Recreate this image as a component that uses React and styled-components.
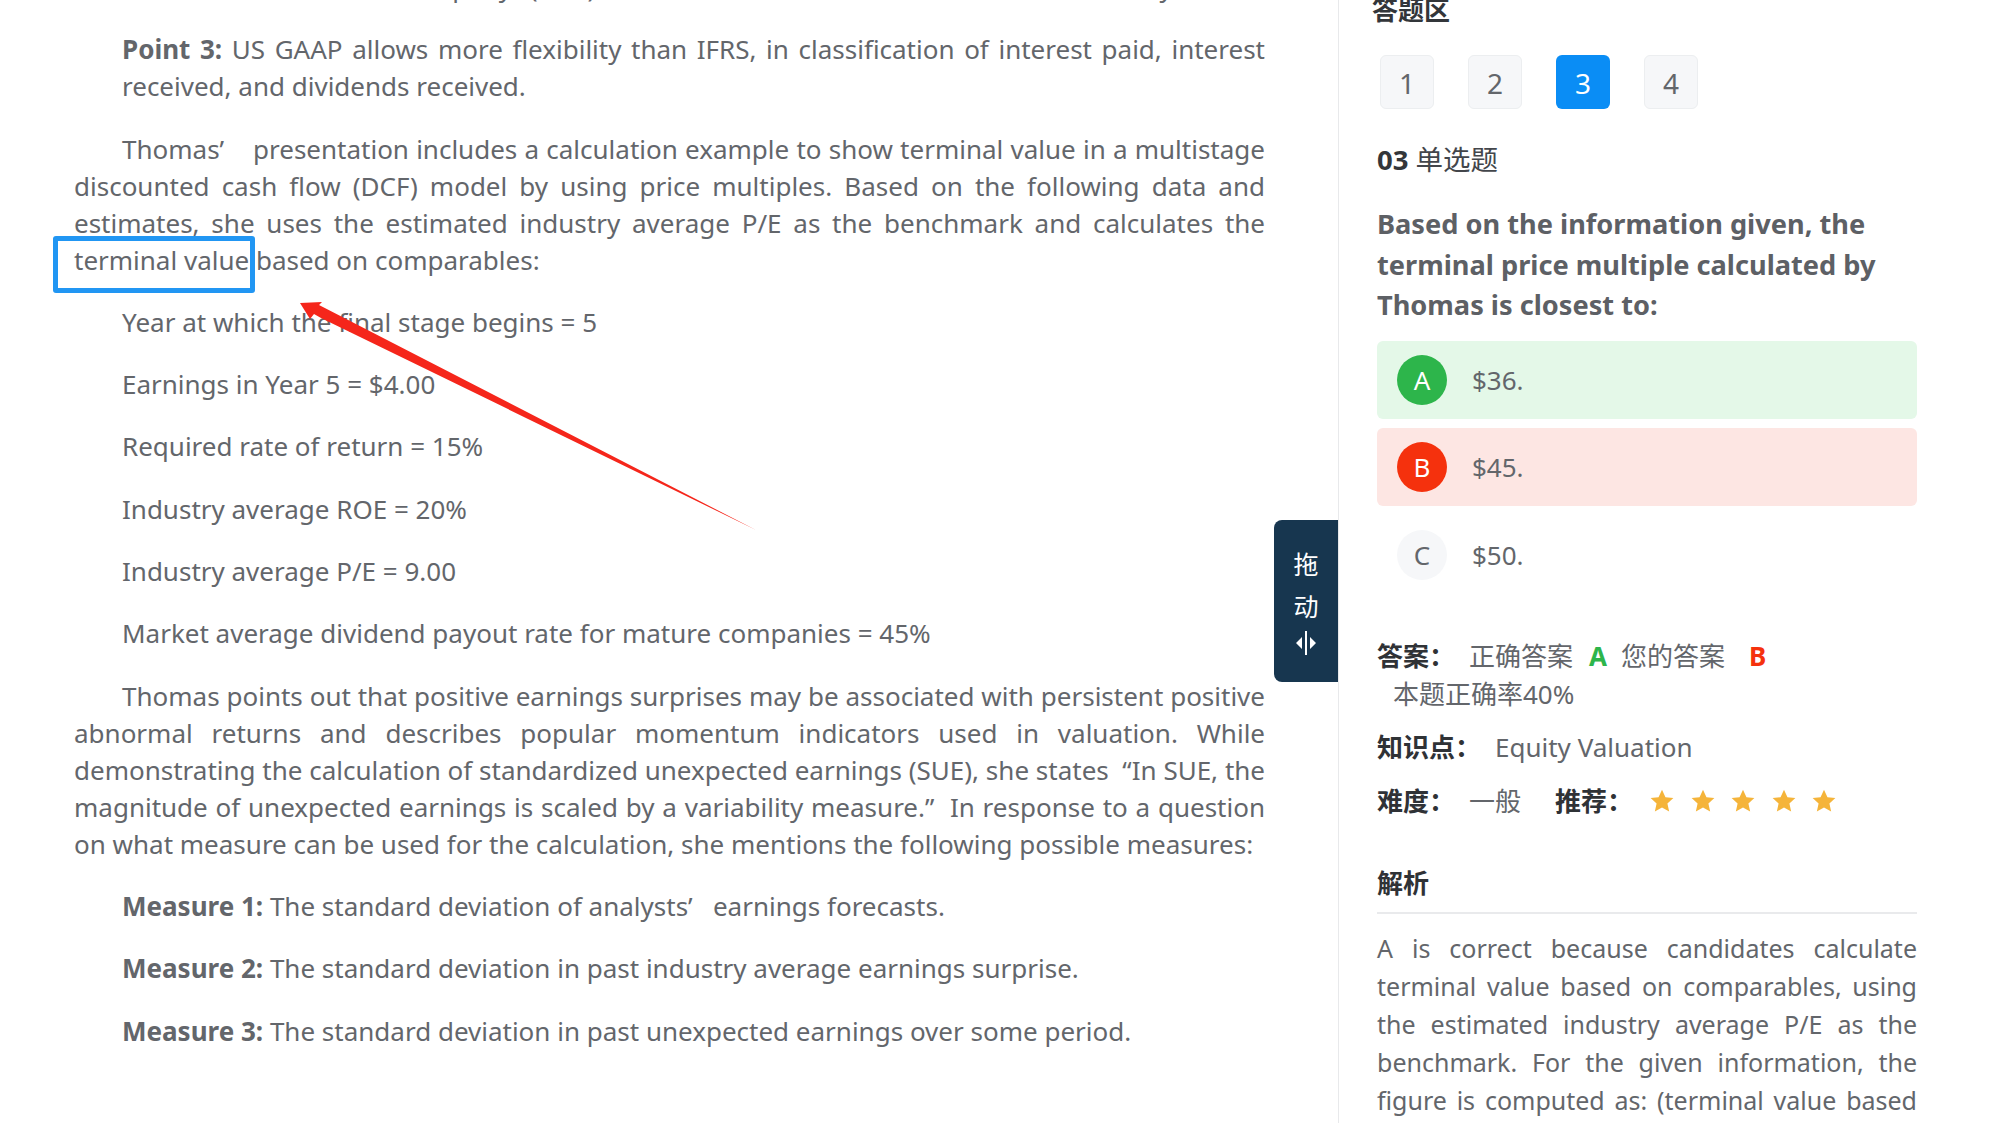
import React from "react";
import styled, { createGlobalStyle } from "styled-components";

const Global = createGlobalStyle`
  html, body { margin: 0; padding: 0; background: #fff; }
  body { font-family: "Noto Sans", "Noto Sans CJK SC", sans-serif; color: #63666b; }
`;
const Page = styled.div`
  display: flex; width: 2000px; height: 1123px; overflow: hidden; position: relative;
`;
const Left = styled.div`
  width: 1339px; flex: none; box-sizing: border-box; padding: 0 73px 0 74px; position: relative;
  border-right: 1px solid #e8e9eb;
`;
const Scroll = styled.div`margin-top: -31px;`;
const P = styled.p`
  margin: 0 0 25.3px; font-size: 26px; line-height: 37px; text-align: justify;
  ${p => p.$pad ? "padding-left: 48px;" : "text-indent: 48px;"}
  b { font-weight: 700; }
  ${p => p.$fill ? "text-align-last: justify;" : ""}
`;
const Handle = styled.div`
  position: absolute; right: 0; top: 520px; width: 64px; height: 162px; background: #17364f;
  border-radius: 8px 0 0 8px; color: #fff; display: flex; flex-direction: column; align-items: center;
  padding-top: 23px; box-sizing: border-box; font-size: 25px; line-height: 42px;
`;
const HandleIcon = styled.svg`margin-top: 4px;`;
const Highlight = styled.div`
  position: absolute; left: 53px; top: 236px; width: 202px; height: 57px; box-sizing: border-box;
  border: 5px solid #2196f3; border-radius: 3px;
`;
const Arrow = styled.svg`position: absolute; left: 290px; top: 290px; pointer-events: none;`;
const Right = styled.div`flex: 1; box-sizing: border-box; padding: 0 83px 0 38px; margin-top: -8px;`;
const Title = styled.div`font-size: 26px; font-weight: 700; color: #33363a; line-height: 36px; margin-left: -5px;`;
const Nums = styled.div`display: flex; gap: 34px; margin: 27px 0 0 3px;`;
const Num = styled.div`
  width: 54px; height: 54px; box-sizing: border-box; border-radius: 6px; display: flex; align-items: center; justify-content: center;
  font-size: 28px; padding-top: 2px; background: ${p => p.$on ? "#0a8df5" : "#f6f7f9"}; color: ${p => p.$on ? "#fff" : "#63666b"};
  border: ${p => p.$on ? "none" : "1px solid #eceef0"};
`;
const QType = styled.div`font-size: 27.5px; line-height: 36px; margin-top: 33px; color: #43464b; b { color: #33363a; font-weight: 700; }`;
const Question = styled.div`font-size: 27.2px; font-weight: 700; line-height: 40.5px; margin-top: 26px; color: #5d6065;`;
const Option = styled.div`
  display: flex; align-items: center; gap: 25px; height: 78px; padding-left: 20px; margin-top: ${p => p.$first ? "15px" : "9.5px"};
  background: ${p => p.$bg || "transparent"}; border-radius: 6px; font-size: 26px;
`;
const Badge = styled.div`
  width: 50px; height: 50px; border-radius: 50%; display: flex; align-items: center; justify-content: center; font-size: 26px;
  background: ${p => p.$bg}; color: ${p => p.$c};
`;
const Row = styled.div`font-size: 26px; line-height: 38px; display: flex; align-items: center; margin-top: ${p => p.$mt || 0}px;`;
const Label = styled.span`font-weight: 700; color: #2f3236; margin-left: ${p => p.$ml || 0}px;`;
const Val = styled.span`margin-left: ${p => p.$ml || 0}px; color: ${p => p.$c || "#63666b"}; font-weight: ${p => p.$b ? 700 : 400};`;
const Stars = styled.span`display: inline-flex; gap: 14.5px; margin-left: 16px;`;
const SubTitle = styled.div`
  font-size: 26px; font-weight: 700; color: #2f3236; line-height: 36px; margin-top: 45px; padding-bottom: 11px; border-bottom: 2px solid #e9eaec;
`;
const Analysis = styled.div`font-size: 25px; line-height: 38px; text-align: justify; margin-top: 15px;`;

const Star = () => (
  <svg width="26" height="26" viewBox="0 0 24 24"><path fill="#f5b43a" d="M12 1.5l3.2 7 7.3.8-5.5 5 1.6 7.5L12 18l-6.6 3.8L7 14.3l-5.5-5 7.3-.8z"/></svg>
);

export default function App() {
  return (
    <Page>
      <Global />
      <Left>
        <Scroll>
          <P $pad $fill><b>Point 2:</b> Under the company (ABC), lease interest will be treated as ordinary items.</P>
          <P $pad><b>Point 3:</b> US GAAP allows more flexibility than IFRS, in classification of interest paid, interest received, and dividends received.</P>
          <P>Thomas’&nbsp;&nbsp;&nbsp;&nbsp;presentation includes a calculation example to show terminal value in a multistage discounted cash flow (DCF) model by using price multiples. Based on the following data and estimates, she uses the estimated industry average P/E as the benchmark and calculates the terminal value based on comparables:</P>
          <P>Year at which the final stage begins = 5</P>
          <P>Earnings in Year 5 = $4.00</P>
          <P>Required rate of return = 15%</P>
          <P>Industry average ROE = 20%</P>
          <P>Industry average P/E = 9.00</P>
          <P>Market average dividend payout rate for mature companies = 45%</P>
          <P>Thomas points out that positive earnings surprises may be associated with persistent positive abnormal returns and describes popular momentum indicators used in valuation. While demonstrating the calculation of standardized unexpected earnings (SUE), she states&nbsp;&nbsp;“In SUE, the magnitude of unexpected earnings is scaled by a variability measure.”&nbsp;&nbsp;In response to a question on what measure can be used for the calculation, she mentions the following possible measures:</P>
          <P><b>Measure 1:</b> The standard deviation of analysts’&nbsp;&nbsp;&nbsp;earnings forecasts.</P>
          <P><b>Measure 2:</b> The standard deviation in past industry average earnings surprise.</P>
          <P><b>Measure 3:</b> The standard deviation in past unexpected earnings over some period.</P>
        </Scroll>
        <Highlight />
        <Arrow width="470" height="242" viewBox="0 0 470 242">
          <path fill="#f5261b" d="M10 13 L32 12 L29 15 L466 240 L31 28 L24 24 L20 29 Z"/>
        </Arrow>
        <Handle>
          <span>拖</span><span>动</span>
          <HandleIcon width="22" height="24" viewBox="0 0 22 24"><path fill="#fff" d="M7 6v12L1 12zM15 6v12l6-6z"/><rect x="10" y="0" width="2" height="24" fill="#fff"/></HandleIcon>
        </Handle>
      </Left>
      <Right>
        <Title>答题区</Title>
        <Nums>
          <Num>1</Num><Num>2</Num><Num $on>3</Num><Num>4</Num>
        </Nums>
        <QType><b>03</b> 单选题</QType>
        <Question>Based on the information given, the terminal price multiple calculated by Thomas is closest to:</Question>
        <Option $first $bg="#e4f8e8"><Badge $bg="#2db54b" $c="#fff">A</Badge>$36.</Option>
        <Option $bg="#fde6e3"><Badge $bg="#f5310d" $c="#fff">B</Badge>$45.</Option>
        <Option><Badge $bg="#f6f7f9" $c="#63666b">C</Badge>$50.</Option>
        <Row $mt={43}><Label>答案：</Label><Val $ml={14}>正确答案</Val><Val $ml={16} $c="#2db54b" $b>A</Val><Val $ml={14}>您的答案</Val><Val $ml={24} $c="#f5310d" $b>B</Val></Row>
        <Row><Val $ml={16}>本题正确率40%</Val></Row>
        <Row $mt={15}><Label>知识点：</Label><Val $ml={14}>Equity Valuation</Val></Row>
        <Row $mt={16}><Label>难度：</Label><Val $ml={14}>一般</Val><Label $ml={34}>推荐：</Label><Stars><Star/><Star/><Star/><Star/><Star/></Stars></Row>
        <SubTitle>解析</SubTitle>
        <Analysis>A is correct because candidates calculate terminal value based on comparables, using the estimated industry average P/E as the benchmark. For the given information, the figure is computed as: (terminal value based on comparables) with the price multiple applied.</Analysis>
      </Right>
    </Page>
  );
}
